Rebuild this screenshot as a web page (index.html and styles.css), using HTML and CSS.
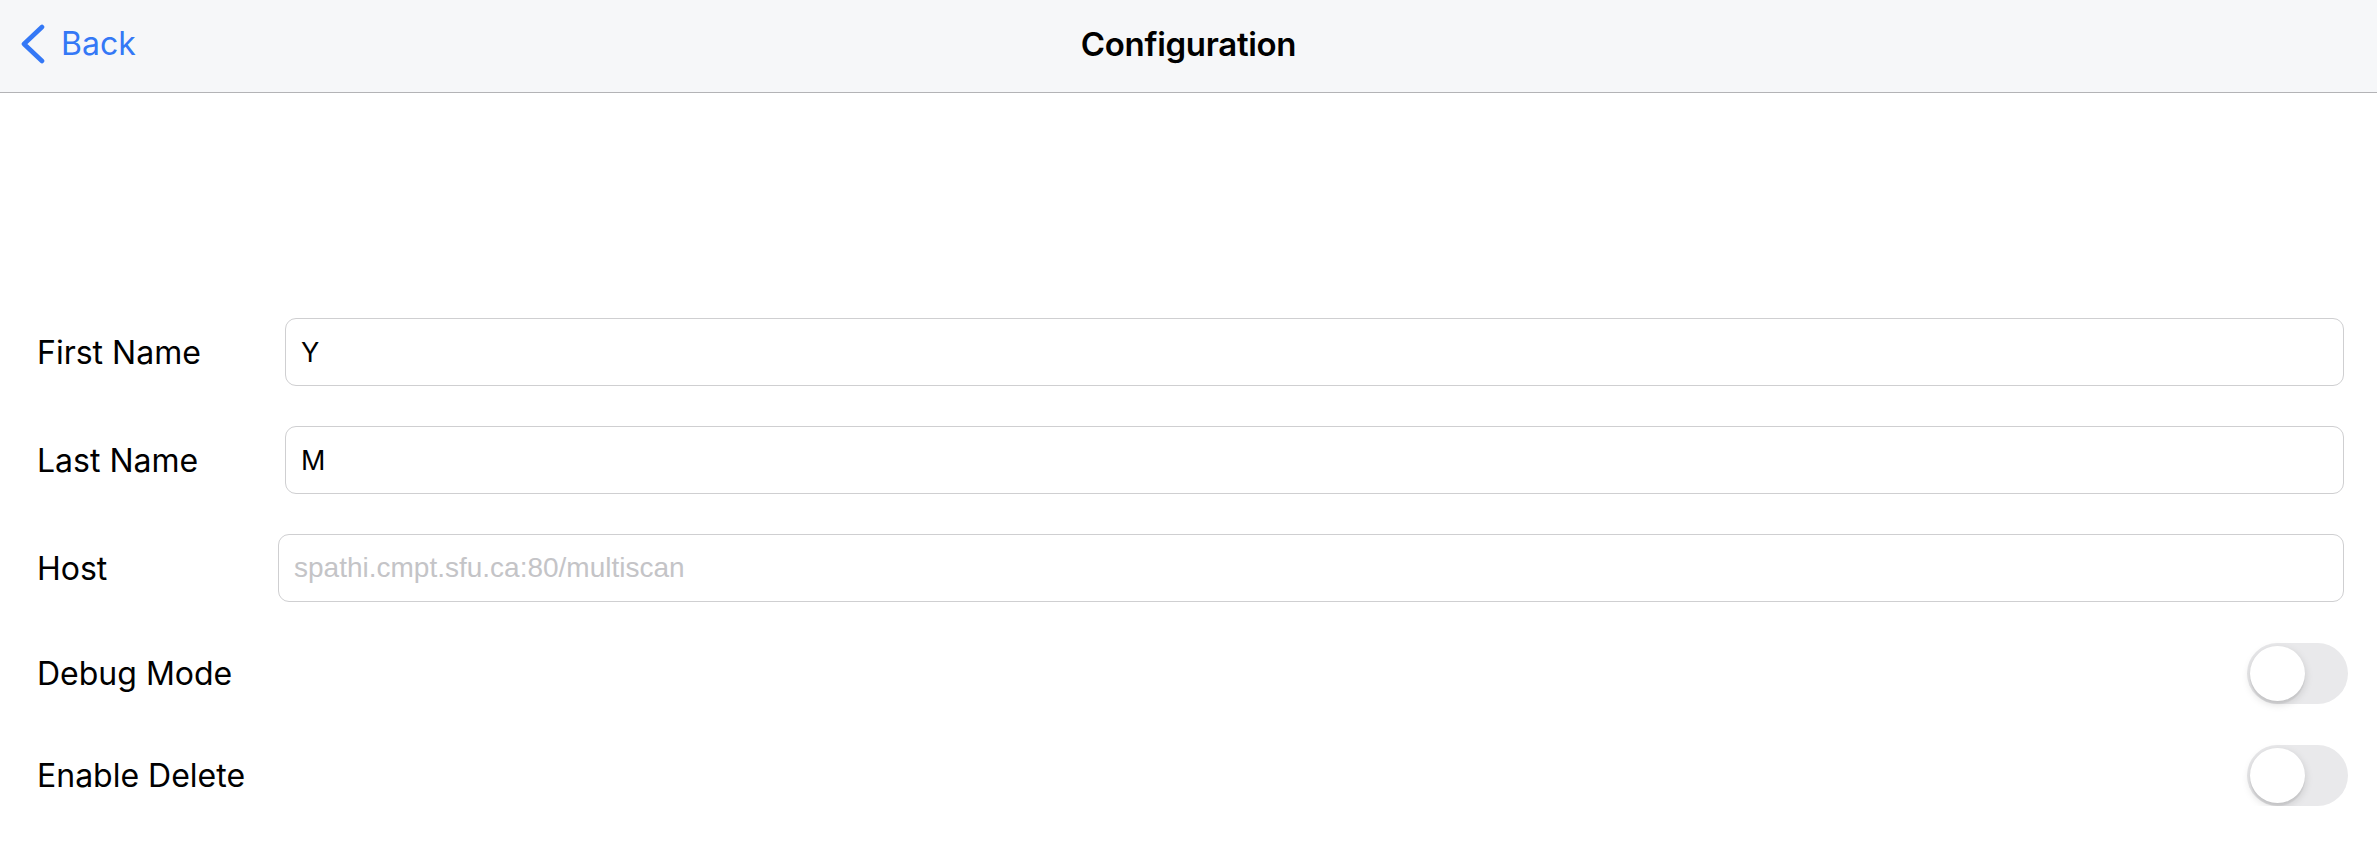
FILE: index.html
```html
<!DOCTYPE html>
<html>
<head>
<meta charset="utf-8">
<link rel="stylesheet" href="styles.css">
</head>
<body>
<header class="navbar">
  <div class="nav-left">
    <a class="back">
      <svg class="chev" width="24" height="40" viewBox="0 0 24 40"><polyline points="21,3 3,20 21,37" fill="none" stroke="#3478f6" stroke-width="4.6" stroke-linecap="round" stroke-linejoin="round"/></svg>
      <span>Back</span>
    </a>
  </div>
  <h1 class="title">Configuration</h1>
  <div class="nav-right"></div>
</header>
<main class="form">
  <div class="row">
    <label class="lbl">First Name</label>
    <div class="field f1">Y</div>
  </div>
  <div class="row">
    <label class="lbl">Last Name</label>
    <div class="field f1">M</div>
  </div>
  <div class="row">
    <label class="lbl">Host</label>
    <div class="field f2 placeholder">spathi.cmpt.sfu.ca:80/multiscan</div>
  </div>
  <div class="row trow">
    <label class="lbl">Debug Mode</label>
    <div class="toggle"><div class="knob"></div></div>
  </div>
  <div class="row trow">
    <label class="lbl">Enable Delete</label>
    <div class="toggle"><div class="knob"></div></div>
  </div>
</main>
</body>
</html>
```
FILE: styles.css
```css
html, body {
  margin: 0;
  padding: 0;
  background: #ffffff;
  font-family: Inter, "Liberation Sans", sans-serif;
  color: #000;
}
.navbar {
  height: 93px;
  box-sizing: border-box;
  padding-bottom: 5px;
  background: #f6f7f9;
  border-bottom: 1px solid #b3b3b6;
  display: flex;
  align-items: center;
  justify-content: space-between;
}
.nav-left, .nav-right {
  width: 300px;
}
.back {
  display: flex;
  align-items: center;
  color: #3478f6;
  font-size: 32px;
  padding-left: 21px;
  gap: 16px;
}
.chev {
  display: block;
}
.title {
  margin: 0;
  font-size: 33px;
  font-weight: 600;
  letter-spacing: -0.3px;
}
.form {
  padding: 225px 33px 0 37px;
  display: flex;
  flex-direction: column;
  gap: 40px;
}
.row {
  display: flex;
  align-items: center;
  height: 68px;
}
.trow {
  height: 62px;
  justify-content: space-between;
}
.lbl {
  font-size: 32px;
  width: 248px;
  flex: none;
}
.field {
  flex: 1;
  height: 66px;
  border: 1px solid #cfcfd1;
  border-radius: 11px;
  display: flex;
  align-items: center;
  font-size: 27px;
  padding-left: 15px;
  box-sizing: content-box;
}
.f2 {
  margin-left: -7px;
  font-family: "Liberation Sans", Arial, sans-serif;
  font-size: 28px;
}
.placeholder {
  color: #c4c4c7;
}
.toggle {
  width: 101px;
  height: 61px;
  border-radius: 31px;
  background: #e9e9eb;
  position: relative;
  margin-right: -4px;
}
.knob {
  position: absolute;
  left: 3px;
  top: 3px;
  width: 55px;
  height: 55px;
  border-radius: 50%;
  background: #fff;
  box-shadow: 0 3px 8px rgba(0,0,0,0.15), 0 3px 1px rgba(0,0,0,0.06);
}
```
